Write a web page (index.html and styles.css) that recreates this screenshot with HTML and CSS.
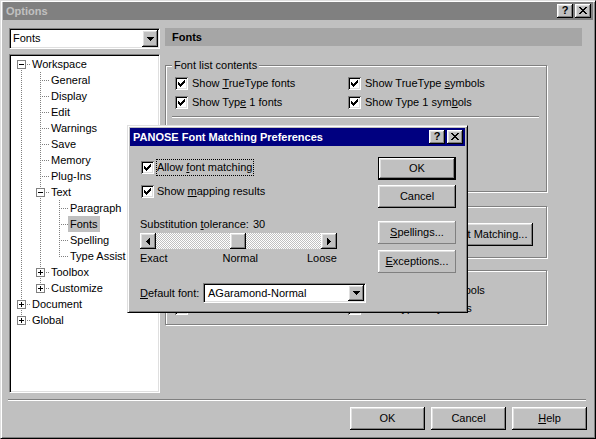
FILE: index.html
```html
<!DOCTYPE html>
<html>
<head>
<meta charset="utf-8">
<title>Options</title>
<link rel="stylesheet" href="styles.css">
</head>
<body>
<div class="window">
  <div class="titlebar inactive">
    <span class="title">Options</span>
    <span class="capbtns">
      <span class="capbtn"><span class="qmark">?</span></span>
      <span class="capbtn"><svg width="8" height="7" viewBox="0 0 8 7" shape-rendering="crispEdges"><path d="M0 0h2v1H0zM6 0h2v1H6zM1 1h2v1H1zM5 1h2v1H5zM2 2h4v1H2zM3 3h2v1H3zM2 4h4v1H2zM1 5h2v1H1zM5 5h2v1H5zM0 6h2v1H0zM6 6h2v1H6z"/></svg></span>
    </span>
  </div>

  <div class="main">
    <div class="leftcol">
      <div class="combo">
        <span class="combo-text">Fonts</span>
        <span class="dd"><svg width="7" height="4" viewBox="0 0 7 4" shape-rendering="crispEdges"><path d="M0 0h7v1H0zM1 1h5v1H1zM2 2h3v1H2zM3 3h1v1H3z"/></svg></span>
      </div>
      <div class="tree">
        <div class="row"><span class="g r"><span class="box minus"></span></span><span class="lbl">Workspace</span></div>
        <div class="row"><span class="g v"></span><span class="g t"></span><span class="lbl">General</span></div>
        <div class="row"><span class="g v"></span><span class="g t"></span><span class="lbl">Display</span></div>
        <div class="row"><span class="g v"></span><span class="g t"></span><span class="lbl">Edit</span></div>
        <div class="row"><span class="g v"></span><span class="g t"></span><span class="lbl">Warnings</span></div>
        <div class="row"><span class="g v"></span><span class="g t"></span><span class="lbl">Save</span></div>
        <div class="row"><span class="g v"></span><span class="g t"></span><span class="lbl">Memory</span></div>
        <div class="row"><span class="g v"></span><span class="g t"></span><span class="lbl">Plug-Ins</span></div>
        <div class="row"><span class="g v"></span><span class="g t"><span class="box minus"></span></span><span class="lbl">Text</span></div>
        <div class="row"><span class="g v"></span><span class="g v"></span><span class="g t"></span><span class="lbl">Paragraph</span></div>
        <div class="row"><span class="g v"></span><span class="g v"></span><span class="g t"></span><span class="lbl sel">Fonts</span></div>
        <div class="row"><span class="g v"></span><span class="g v"></span><span class="g t"></span><span class="lbl">Spelling</span></div>
        <div class="row"><span class="g v"></span><span class="g v"></span><span class="g l"></span><span class="lbl">Type Assist</span></div>
        <div class="row"><span class="g v"></span><span class="g t"><span class="box plus"></span></span><span class="lbl">Toolbox</span></div>
        <div class="row"><span class="g v"></span><span class="g l"><span class="box plus"></span></span><span class="lbl">Customize</span></div>
        <div class="row"><span class="g t"><span class="box plus"></span></span><span class="lbl">Document</span></div>
        <div class="row"><span class="g l"><span class="box plus"></span></span><span class="lbl">Global</span></div>
      </div>
    </div>

    <div class="rightcol">
      <div class="header">Fonts</div>

      <div class="group g1">
        <span class="legend">Font list contents</span>
        <div class="cbgrid">
          <div class="cbitem"><span class="cb"><svg width="7" height="7" viewBox="0 0 7 7" shape-rendering="crispEdges"><path d="M0 2h1v3H0zM1 3h1v3H1zM2 4h1v3H2zM3 3h1v3H3zM4 2h1v3H4zM5 1h1v3H5zM6 0h1v3H6z"/></svg></span><span>Show <u>T</u>rueType fonts</span></div>
          <div class="cbitem"><span class="cb"><svg width="7" height="7" viewBox="0 0 7 7" shape-rendering="crispEdges"><path d="M0 2h1v3H0zM1 3h1v3H1zM2 4h1v3H2zM3 3h1v3H3zM4 2h1v3H4zM5 1h1v3H5zM6 0h1v3H6z"/></svg></span><span>Show TrueType <u>s</u>ymbols</span></div>
          <div class="cbitem"><span class="cb"><svg width="7" height="7" viewBox="0 0 7 7" shape-rendering="crispEdges"><path d="M0 2h1v3H0zM1 3h1v3H1zM2 4h1v3H2zM3 3h1v3H3zM4 2h1v3H4zM5 1h1v3H5zM6 0h1v3H6z"/></svg></span><span>Show Typ<u>e</u> 1 fonts</span></div>
          <div class="cbitem"><span class="cb"><svg width="7" height="7" viewBox="0 0 7 7" shape-rendering="crispEdges"><path d="M0 2h1v3H0zM1 3h1v3H1zM2 4h1v3H2zM3 3h1v3H3zM4 2h1v3H4zM5 1h1v3H5zM6 0h1v3H6z"/></svg></span><span>Show Type 1 sym<u>b</u>ols</span></div>
        </div>
        <div class="sep inner-sep"></div>
      </div>

      <div class="group g2">
        <span class="btn wide">PANOSE Font Matching...</span>
      </div>

      <div class="group g3">
        <div class="cbgrid">
          <div class="cbitem"><span class="cb"></span><span>Show font previews</span></div>
          <div class="cbitem"><span class="cb"></span><span>Show TrueType symbols</span></div>
          <div class="cbitem"><span class="cb"></span><span>Show font names</span></div>
          <div class="cbitem"><span class="cb"></span><span>Show Type 1 symbols</span></div>
        </div>
      </div>
    </div>
  </div>

  <div class="sep main-sep"></div>

  <div class="buttons">
    <span class="btn mbtn">OK</span>
    <span class="btn mbtn">Cancel</span>
    <span class="btn mbtn"><span><u>H</u>elp</span></span>
  </div>

  <div class="dialog">
    <div class="dtitle">
      <span class="title">PANOSE Font Matching Preferences</span>
      <span class="capbtns">
        <span class="capbtn"><span class="qmark">?</span></span>
        <span class="capbtn"><svg width="8" height="7" viewBox="0 0 8 7" shape-rendering="crispEdges"><path d="M0 0h2v1H0zM6 0h2v1H6zM1 1h2v1H1zM5 1h2v1H5zM2 2h4v1H2zM3 3h2v1H3zM2 4h4v1H2zM1 5h2v1H1zM5 5h2v1H5zM0 6h2v1H0zM6 6h2v1H6z"/></svg></span>
      </span>
    </div>
    <div class="dbody">
      <div class="dleft">
        <div class="dcb first"><span class="cb"><svg width="7" height="7" viewBox="0 0 7 7" shape-rendering="crispEdges"><path d="M0 2h1v3H0zM1 3h1v3H1zM2 4h1v3H2zM3 3h1v3H3zM4 2h1v3H4zM5 1h1v3H5zM6 0h1v3H6z"/></svg></span><span class="clabel focus">Allow <u>f</u>ont matching</span></div>
        <div class="dcb second"><span class="cb"><svg width="7" height="7" viewBox="0 0 7 7" shape-rendering="crispEdges"><path d="M0 2h1v3H0zM1 3h1v3H1zM2 4h1v3H2zM3 3h1v3H3zM4 2h1v3H4zM5 1h1v3H5zM6 0h1v3H6z"/></svg></span><span class="clabel">Show <u>m</u>apping results</span></div>
        <div class="tol"><span class="tol-l">Substitution <u>t</u>olerance:</span><span>30</span></div>
        <div class="scroll">
          <span class="sbtn"><svg width="4" height="7" viewBox="0 0 4 7" shape-rendering="crispEdges"><path d="M3 0h1v7H3zM2 1h1v5H2zM1 2h1v3H1zM0 3h1v1H0z"/></svg></span>
          <span class="track"><span class="thumb"></span></span>
          <span class="sbtn"><svg width="4" height="7" viewBox="0 0 4 7" shape-rendering="crispEdges"><path d="M0 0h1v7H0zM1 1h1v5H1zM2 2h1v3H2zM3 3h1v1H3z"/></svg></span>
        </div>
        <div class="scale"><span>Exact</span><span class="normal">Normal</span><span>Loose</span></div>
        <div class="dfrow">
          <span class="dflabel"><u>D</u>efault font:</span>
          <div class="combo dcombo">
            <span class="combo-text">AGaramond-Normal</span>
            <span class="dd"><svg width="7" height="4" viewBox="0 0 7 4" shape-rendering="crispEdges"><path d="M0 0h7v1H0zM1 1h5v1H1zM2 2h3v1H2zM3 3h1v1H3z"/></svg></span>
          </div>
        </div>
      </div>
      <div class="dright">
        <span class="btn dbtn default">OK</span>
        <span class="btn dbtn cancel">Cancel</span>
        <span class="btn dbtn flat spell"><span><u>S</u>pellings...</span></span>
        <span class="btn dbtn flat exc"><span><u>E</u>xceptions...</span></span>
      </div>
    </div>
  </div>
</div>
</body>
</html>
```

FILE: styles.css
```css
* { box-sizing: border-box; }
html, body { margin: 0; padding: 0; background: #c0c0c0; }
body {
  font-family: "Liberation Sans", Arial, sans-serif;
  font-size: 11px;
  line-height: 13px;
  color: #000;
}
u { text-decoration: underline; text-underline-offset: 1px; text-decoration-thickness: 1px; }

.window {
  position: relative;
  width: 596px;
  height: 439px;
  background: #c0c0c0;
  border: 1px solid;
  border-color: #dfdfdf #000 #000 #dfdfdf;
  box-shadow: inset 1px 1px #fff, inset -1px -1px #808080;
  padding: 1px 2px 2px 2px;
  display: flex;
  flex-direction: column;
}

.titlebar {
  flex: none;
  height: 18px;
  display: flex;
  align-items: center;
  justify-content: space-between;
  padding: 0 2px 0 3px;
  font-weight: bold;
}
.titlebar.inactive { background: #808080; color: #c0c0c0; }

.capbtns { display: flex; gap: 2px; }
.capbtn {
  width: 16px;
  height: 14px;
  background: #c0c0c0;
  color: #000;
  box-shadow: inset -1px -1px #000, inset 1px 1px #fff, inset -2px -2px #808080, inset 2px 2px #dfdfdf;
  display: flex;
  align-items: center;
  justify-content: center;
}
.capbtn svg { display: block; margin-top: -1px; }
.qmark { font-weight: bold; font-size: 11px; line-height: 11px; margin-top: -1px; }

.main {
  flex: none;
  height: 373px;
  display: flex;
  gap: 5px;
  padding: 8px 11px 0 6px;
}
.leftcol { width: 151px; display: flex; flex-direction: column; gap: 5px; }
.rightcol { width: 417px; display: flex; flex-direction: column; }

.combo {
  height: 21px;
  background: #fff;
  border: 1px solid;
  border-color: #808080 #fff #fff #808080;
  box-shadow: inset 1px 1px #000, inset -1px -1px #dfdfdf;
  padding: 1px;
  display: flex;
  align-items: stretch;
}
.combo-text { flex: 1; display: flex; align-items: center; padding-left: 2px; white-space: nowrap; }
.dd {
  width: 16px;
  background: #c0c0c0;
  box-shadow: inset -1px -1px #000, inset 1px 1px #fff, inset -2px -2px #808080, inset 2px 2px #dfdfdf;
  display: flex;
  align-items: center;
  justify-content: center;
}
.dd svg { display: block; }

.tree {
  height: 339px;
  background: #fff;
  border: 1px solid;
  border-color: #808080 #fff #fff #808080;
  box-shadow: inset 1px 1px #000, inset -1px -1px #dfdfdf;
  padding: 1px;
  display: flex;
  flex-direction: column;
}
.row { display: flex; height: 16px; flex: none; }
.g {
  --vd: repeating-linear-gradient(to bottom, #808080 0 1px, transparent 1px 2px);
  --hd: repeating-linear-gradient(to right, #808080 0 1px, transparent 1px 2px);
  width: 19px;
  height: 16px;
  flex: none;
  display: flex;
  align-items: flex-start;
}
.g.v { background: var(--vd) 10px 0 / 1px 16px no-repeat; }
.g.t { background: var(--hd) 12px 8px / 7px 1px no-repeat, var(--vd) 10px 0 / 1px 16px no-repeat; }
.g.l { background: var(--hd) 12px 8px / 7px 1px no-repeat, var(--vd) 10px 0 / 1px 9px no-repeat; }
.g.r { background: var(--hd) 12px 8px / 7px 1px no-repeat, var(--vd) 10px 8px / 1px 8px no-repeat; }
.box {
  width: 9px;
  height: 9px;
  margin: 4px 0 0 6px;
  border: 1px solid #808080;
  background: linear-gradient(#000, #000) center / 5px 1px no-repeat, #fff;
}
.box.plus {
  background: linear-gradient(#000, #000) center / 5px 1px no-repeat, linear-gradient(#000, #000) center / 1px 5px no-repeat, #fff;
}
.lbl { padding: 0 2px; line-height: 16px; white-space: nowrap; }
.lbl.sel { background: #c0c0c0; }

.header {
  height: 18px;
  flex: none;
  background: #a6a6a6;
  font-weight: bold;
  display: flex;
  align-items: center;
  padding-left: 7px;
}

.group {
  width: 382px;
  flex: none;
  border: 1px solid #808080;
  box-shadow: 1px 1px 0 #fff, inset 1px 1px 0 #fff;
}
.g1 { margin-top: 19px; height: 127px; }
.g2 {
  margin-top: 14px;
  height: 52px;
  display: flex;
  justify-content: flex-end;
  align-items: flex-start;
  padding: 16px 13px 0 0;
}
.g3 { margin-top: 12px; height: 55px; padding-top: 11px; }

.legend {
  display: block;
  width: max-content;
  height: 15px;
  line-height: 15px;
  margin: -8px 0 0 6px;
  padding: 0 2px;
  background: #c0c0c0;
}
.cbgrid {
  display: grid;
  grid-template-columns: 173px auto;
  row-gap: 2px;
  padding-left: 9px;
  margin-top: 2px;
}
.g3 .cbgrid { margin-top: 0; row-gap: 1px; }
.cbitem { display: flex; align-items: center; gap: 4px; height: 17px; white-space: nowrap; }

.cb {
  flex: none;
  display: inline-flex;
  width: 13px;
  height: 13px;
  padding: 3px;
  background: #fff;
  box-shadow: inset 1px 1px #808080, inset -1px -1px #fff, inset 2px 2px #000, inset -2px -2px #dfdfdf;
}
.cb svg { display: block; }

.sep { height: 2px; border-top: 1px solid #808080; border-bottom: 1px solid #fff; flex: none; }
.inner-sep { margin: 5px 7px 0 6px; }
.main-sep { margin: 6px 7px 0 5px; }

.btn {
  background: #c0c0c0;
  box-shadow: inset -1px -1px #000, inset 1px 1px #fff, inset -2px -2px #808080, inset 2px 2px #dfdfdf;
  display: flex;
  align-items: center;
  justify-content: center;
  white-space: nowrap;
}
.wide { width: 138px; height: 23px; }

.buttons {
  flex: none;
  margin-top: 6px;
  height: 23px;
  display: flex;
  justify-content: flex-end;
  gap: 6px;
  padding-right: 6px;
}
.mbtn { width: 75px; height: 23px; }

/* Dialog overlay */
.dialog {
  position: absolute;
  left: 126px;
  top: 124px;
  width: 341px;
  height: 188px;
  background: #c0c0c0;
  border: 1px solid;
  border-color: #dfdfdf #000 #000 #dfdfdf;
  box-shadow: inset 1px 1px #fff, inset -1px -1px #808080;
  padding: 2px;
  display: flex;
  flex-direction: column;
}
.dtitle {
  flex: none;
  height: 18px;
  background: #000080;
  color: #fff;
  font-weight: bold;
  display: flex;
  align-items: center;
  justify-content: space-between;
  padding: 0 2px 0 3px;
}
.dbody { display: flex; gap: 12px; padding: 11px 9px 0 10px; }
.dleft { width: 226px; display: flex; flex-direction: column; }
.dright { width: 78px; display: flex; flex-direction: column; }

.dcb { display: flex; align-items: center; height: 17px; }
.dcb.first { margin-top: 2px; }
.dcb.second { margin-top: 7px; }
.dcb .cb { margin: 0 2px 0 1px; }
.clabel { border: 1px solid transparent; line-height: 15px; white-space: nowrap; padding-right: 1px; }
.clabel.focus { border: 1px dotted #000; }

.tol { margin-top: 17px; height: 14px; line-height: 14px; display: flex; }
.tol-l { width: 113px; white-space: nowrap; }

.scroll { margin-top: 2px; height: 16px; width: 197px; display: flex; }
.sbtn {
  width: 16px;
  height: 16px;
  flex: none;
  background: #c0c0c0;
  box-shadow: inset -1px -1px #000, inset 1px 1px #fff, inset -2px -2px #808080, inset 2px 2px #dfdfdf;
  display: flex;
  align-items: center;
  justify-content: center;
}
.sbtn svg { display: block; }
.track {
  flex: 1;
  display: flex;
  background-image: repeating-conic-gradient(#c0c0c0 0 25%, #fff 0 50%);
  background-size: 2px 2px;
}
.thumb {
  width: 16px;
  height: 16px;
  margin-left: 74px;
  background: #c0c0c0;
  box-shadow: inset -1px -1px #000, inset 1px 1px #fff, inset -2px -2px #808080, inset 2px 2px #dfdfdf;
}
.scale { margin-top: 2px; width: 197px; height: 14px; line-height: 14px; display: flex; justify-content: space-between; }
.normal { margin-left: 6px; }

.dfrow { margin-top: 18px; display: flex; align-items: center; }
.dflabel { width: 63px; white-space: nowrap; flex: none; }
.dcombo { width: 163px; height: 20px; }
.dcombo .combo-text { padding-left: 3px; }

.dbtn { width: 78px; height: 23px; flex: none; }
.dbtn.default {
  border: 1px solid #000;
  box-shadow: inset -1px -1px #000, inset 1px 1px #fff, inset -2px -2px #808080, inset 2px 2px #dfdfdf;
}
.dbtn.cancel { margin-top: 5px; }
.dbtn.flat { box-shadow: inset -1px -1px #808080, inset 1px 1px #fff, inset -2px -2px #c0c0c0, inset 2px 2px #dfdfdf; }
.dbtn.spell { margin-top: 13px; }
.dbtn.exc { margin-top: 6px; }
```
